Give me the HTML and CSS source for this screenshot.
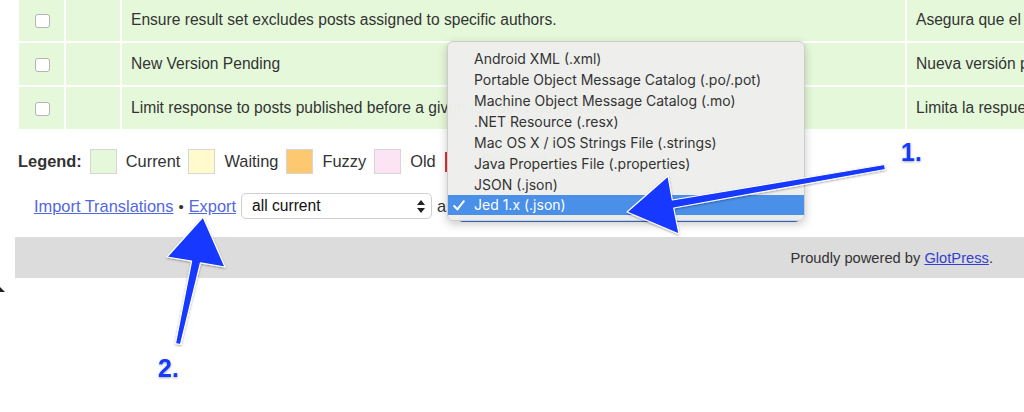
FILE: index.html
```html
<!DOCTYPE html>
<html lang="en">
<head>
<meta charset="utf-8">
<title>GlotPress export</title>
<link rel="stylesheet" href="styles.css">
</head>
<body>
<div class="page">
  <table class="strings">
    <colgroup><col class="w-check"><col class="w-prio"><col class="w-orig"><col class="w-trans"></colgroup>
    <tr>
      <td class="c-check"><span class="cb"></span></td><td></td>
      <td class="c-text">Ensure result set excludes posts assigned to specific authors.</td>
      <td class="c-text">Asegura que el conjunto de resultados excluye entradas</td>
    </tr>
    <tr>
      <td class="c-check"><span class="cb"></span></td><td></td>
      <td class="c-text">New Version Pending</td>
      <td class="c-text">Nueva versión pendiente</td>
    </tr>
    <tr>
      <td class="c-check"><span class="cb"></span></td><td></td>
      <td class="c-text">Limit response to posts published before a given ISO8601 compliant date.</td>
      <td class="c-text">Limita la respuesta a entradas publicadas</td>
    </tr>
  </table>

  <div class="legend">
    <strong class="legend-title">Legend:</strong>
    <span class="sw sw-current"></span><span class="lbl">Current</span>
    <span class="sw sw-waiting"></span><span class="lbl">Waiting</span>
    <span class="sw sw-fuzzy"></span><span class="lbl">Fuzzy</span>
    <span class="sw sw-old"></span><span class="lbl">Old</span>
    <span class="sw sw-rejected"></span><span class="lbl">Rejected</span>
  </div>

  <div class="actions">
    <a href="#" class="link">Import Translations</a><span class="sep">•</span><a href="#" class="link">Export</a>
    <div class="fake-select">
      <span>all current</span>
      <svg class="updown" width="8" height="13" viewBox="0 0 8 13"><path d="M4 0 L8 5 H0 Z M4 13 L8 8 H0 Z" fill="#222"/></svg>
    </div>
    <span class="as">as</span>
    <div class="fmt-select"></div>
  </div>

  <footer class="footer">Proudly powered by&nbsp;<a href="#" class="flink">GlotPress</a>.</footer>
</div>

<div class="menu">
  <div class="item">Android XML (.xml)</div>
  <div class="item">Portable Object Message Catalog (.po/.pot)</div>
  <div class="item">Machine Object Message Catalog (.mo)</div>
  <div class="item">.NET Resource (.resx)</div>
  <div class="item">Mac OS X / iOS Strings File (.strings)</div>
  <div class="item">Java Properties File (.properties)</div>
  <div class="item">JSON (.json)</div>
  <div class="item selected"><svg class="check" width="12" height="11" viewBox="0 0 12 11"><path d="M1.2 6 L4.4 9.4 L10.8 1.2" fill="none" stroke="#fff" stroke-width="2" stroke-linecap="round" stroke-linejoin="round"/></svg>Jed 1.x (.json)</div>
</div>

<span class="edge-mark"></span>

<svg class="annot" width="1024" height="412" viewBox="0 0 1024 412">
  <defs>
    <filter id="sh" x="-20%" y="-20%" width="140%" height="140%">
      <feDropShadow dx="0" dy="1" stdDeviation="1.2" flood-color="#000" flood-opacity="0.35"/>
    </filter>
  </defs>
  <g fill="#1238ff" stroke="#ffffff" stroke-width="1.2" stroke-linejoin="round" filter="url(#sh)">
    <polygon points="884.6,164.5 672.3,200 668,176 627,212 679,234 673.7,208 885.4,169.5"/>
    <polygon points="175.5,343.5 191.6,261.1 167,257 203,217 225,267 200.4,262.9 180.5,344.5"/>
  </g>
  <g class="num" fill="#1238ff" filter="url(#sh)">
    <text x="901" y="161">1.</text>
    <text x="158" y="377">2.</text>
  </g>
</svg>
</body>
</html>
```

FILE: styles.css
```css
html, body {
  margin: 0;
  padding: 0;
  background: #ffffff;
  overflow: hidden;
  width: 1024px;
  height: 412px;
}
body {
  position: relative;
  font-family: "Liberation Sans", Arial, sans-serif;
  font-size: 16.4px;
  color: #333333;
}
.page {
  width: 1024px;
}

/* table */
.strings {
  table-layout: fixed;
  width: 1092px;
  border-collapse: separate;
  border-spacing: 2px;
  margin: -3px 0 0 17px;
  font-size: 15.6px;
}
.w-check { width: 45px; }
.w-prio { width: 54px; }
.w-orig { width: 783px; }
.w-trans { width: 200px; }
.strings td {
  background: #e5f9da;
  height: 42px;
  padding: 0;
  vertical-align: middle;
  white-space: nowrap;
  overflow: hidden;
}
.c-check { text-align: center; }
.cb {
  display: inline-block;
  width: 13px;
  height: 12px;
  background: #ffffff;
  border: 1px solid #b4b4b4;
  border-radius: 3px;
  vertical-align: middle;
  margin-left: 1px;
}
.c-text { padding-left: 9px !important; }

/* legend */
.legend {
  display: flex;
  align-items: center;
  margin: 18px 0 0 18px;
  height: 25px;
}
.legend-title { font-weight: bold; margin-right: 8px; }
.sw {
  width: 25px;
  height: 23px;
  border: 1px solid #d6d6d6;
  margin-right: 9px;
}
.lbl { margin-right: 8px; }
.sw-current { background: #e5f9da; }
.sw-waiting { background: #fffbcd; }
.sw-fuzzy { background: #fdc870; }
.sw-old { background: #fde4f5; }
.sw-rejected { background: #ffffff; border: none; border-left: 3px solid #e33030; height: 20px; margin-left: 1px; }

/* actions */
.actions {
  display: flex;
  align-items: center;
  height: 26px;
  margin: 19px 0 0 34px;
}
.link { color: #5367e0; text-decoration: underline; }
.sep { margin: 0 5px; color: #333; font-size: 15px; }
.fake-select {
  box-sizing: border-box;
  width: 191px;
  height: 26px;
  margin-left: 5px;
  border: 1px solid #cfcfcf;
  border-radius: 5px;
  background: #fff;
  display: flex;
  align-items: center;
  justify-content: space-between;
  padding: 0 6px 0 10px;
  color: #111;
  font-size: 15.6px;
}
.as { margin-left: 5px; }
.fmt-select {
  align-self: flex-start;
  margin-top: 2px;
  margin-left: 5px;
  width: 340px;
  height: 27px;
  background: #3474e6;
  border-radius: 4px;
}

/* footer */
.footer {
  margin: 18px 0 0 15px;
  height: 41px;
  background: #dcdcdc;
  display: flex;
  align-items: center;
  justify-content: flex-end;
  padding-right: 31px;
  color: #333;
  font-size: 14.7px;
}
.flink { color: #3340d0; text-decoration: underline; }

/* open dropdown menu (overlay) */
.menu {
  position: absolute;
  left: 447px;
  top: 41px;
  width: 358px;
  box-sizing: border-box;
  padding: 6px 0 5px;
  background: rgba(238, 239, 236, 0.98);
  border: 1px solid #cdcdcd;
  border-radius: 6px;
  box-shadow: 0 3px 10px rgba(0, 0, 0, 0.22);
  font-family: Inter, "Noto Sans", sans-serif;
  font-size: 14px;
  color: #333333;
}
.item {
  height: 21px;
  line-height: 21px;
  padding-left: 26px;
  position: relative;
  white-space: nowrap;
}
.item.selected {
  background: #4a8fe8;
  color: #ffffff;
  height: 20px;
  line-height: 20px;
}
.check {
  position: absolute;
  left: 5px;
  top: 5px;
}

/* tiny page-edge glyph fragment */
.edge-mark {
  position: absolute;
  left: 0;
  top: 287px;
  width: 0;
  height: 0;
  border-left: 5px solid #222;
  border-top: 5px solid transparent;
}

/* annotations */
.annot {
  position: absolute;
  left: 0;
  top: 0;
  pointer-events: none;
}
.num text {
  font-family: "Liberation Sans", Arial, sans-serif;
  font-weight: bold;
  font-size: 25px;
}
```
